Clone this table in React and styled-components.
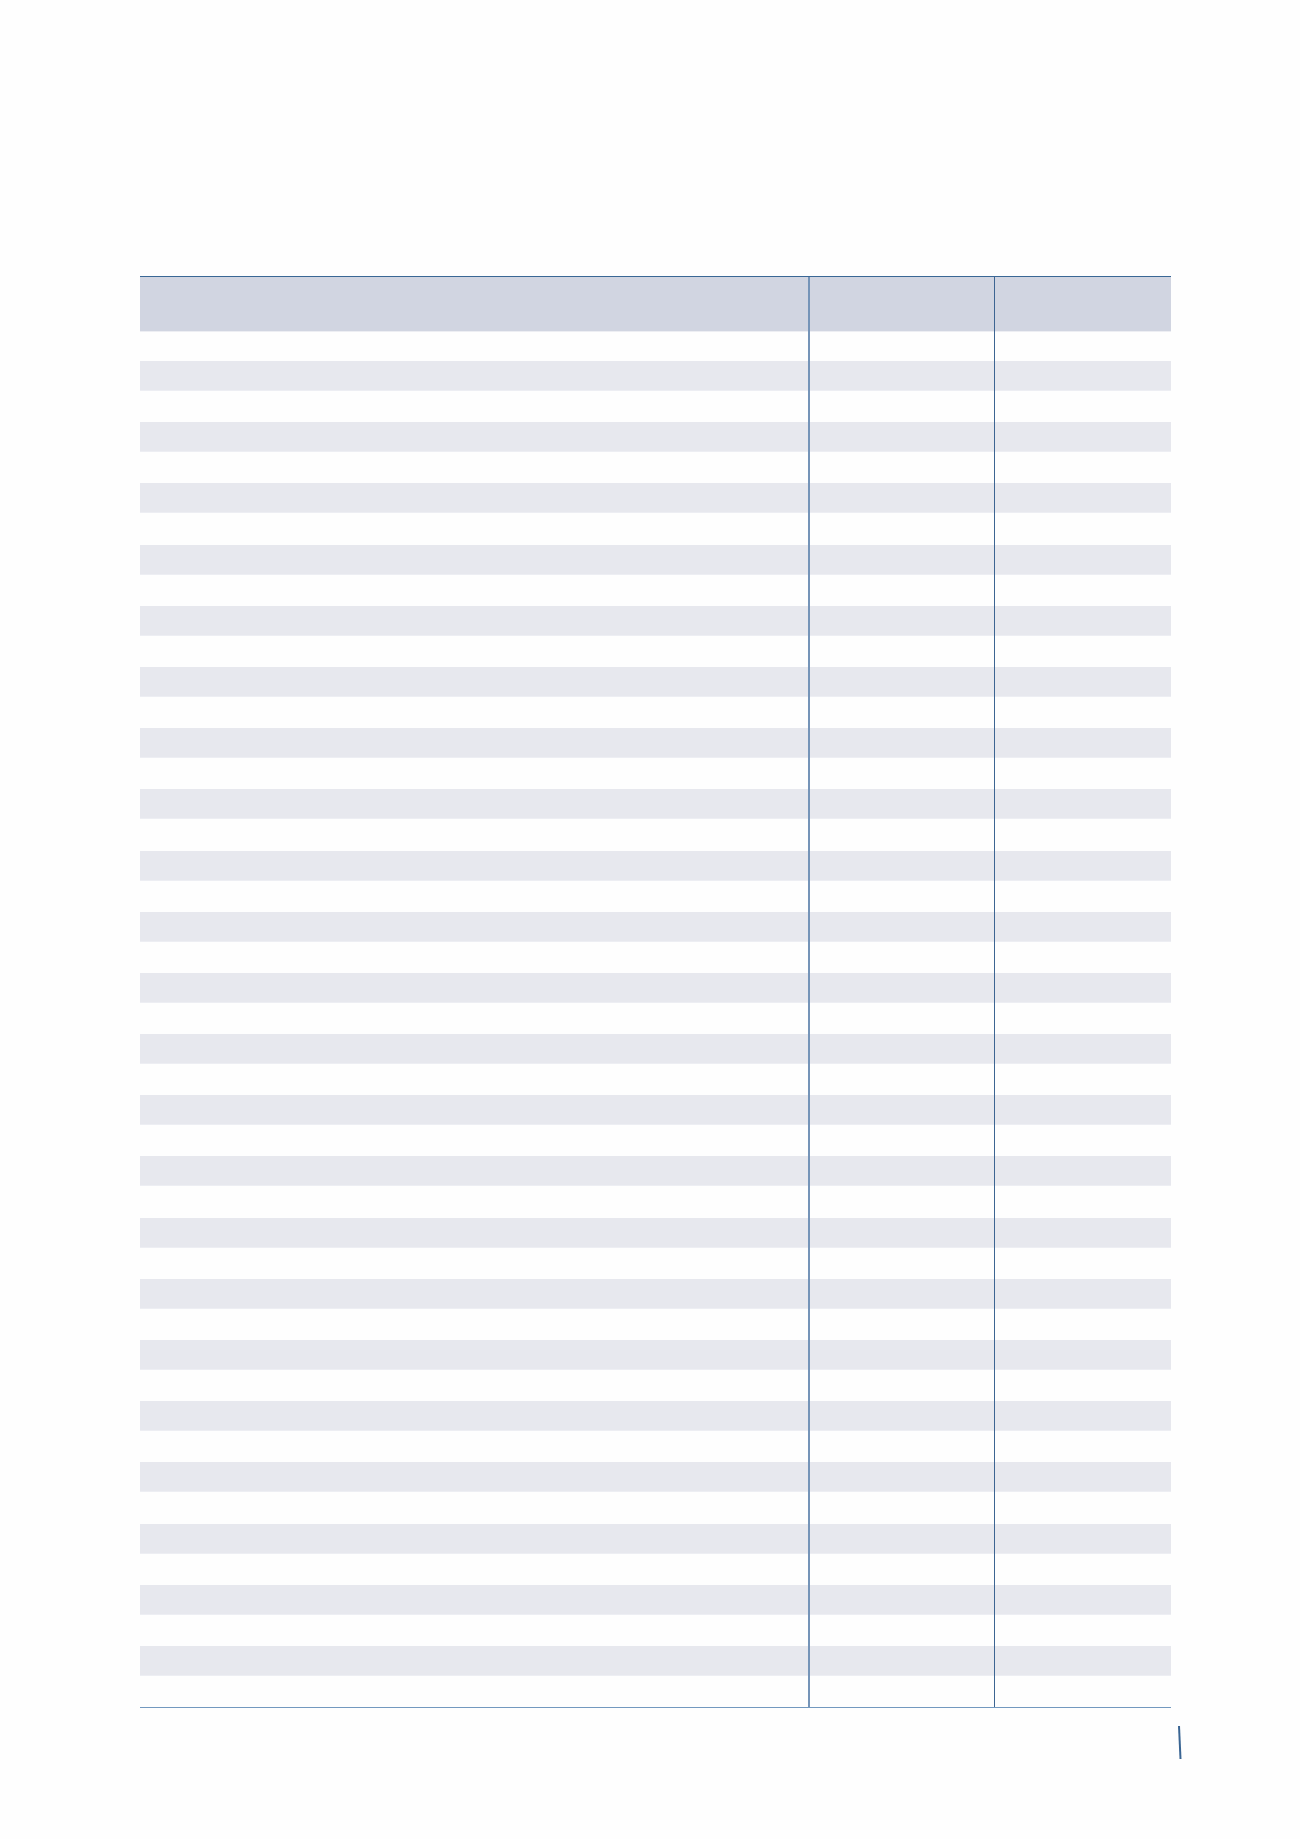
import React from "react";
import styled, { createGlobalStyle } from "styled-components";

const Global = createGlobalStyle`
  html, body { margin: 0; padding: 0; background: #fefefe; }
  body { font-family: "Liberation Sans", Arial, sans-serif; }
`;

const Page = styled.div`
  width: 1300px;
  min-height: 1839px;
  box-sizing: border-box;
  padding: 276px 0 0 140px;
  background: #fefefe;
`;

const Table = styled.div`
  width: 1031px;
  border-top: 1.5px solid #3a6795;
  border-bottom: 1.5px solid #7399bf;
  display: flex;
  flex-direction: column;
`;

const Row = styled.div`
  display: grid;
  grid-template-columns: 668px 186px 177px;
  height: ${(p) => p.$h}px;
  background: ${(p) =>
    p.$kind === "head" ? "#d1d5e1" : p.$kind === "stripe" ? "#e7e8ee" : "#fefefe"};
  box-shadow: ${(p) => (p.$kind === "white" ? "none" : "inset 0 -1px 0 #edeef3")};
`;

const Cell = styled.div`
  box-sizing: border-box;
  border-left: ${(p) =>
    p.$divider === 1
      ? "2px solid #7594b8"
      : p.$divider === 2
      ? "1px solid #3d6592"
      : "none"};
`;

const Footer = styled.div`
  width: 1031px;
  display: flex;
  justify-content: flex-end;
  margin-top: 17px;
`;

const Mark = styled.svg`
  display: block;
  margin-right: -12px;
`;

function TableRow({ h, kind }) {
  return (
    <Row $h={h} $kind={kind}>
      <Cell />
      <Cell $divider={1} />
      <Cell $divider={2} />
    </Row>
  );
}

export default function App() {
  const rows = [{ h: 29, kind: "white" }];
  for (let i = 0; i < 22; i++) {
    rows.push({ h: 30, kind: "stripe" });
    rows.push({ h: i < 21 ? 31.2 : 31, kind: "white" });
  }
  return (
    <>
      <Global />
      <Page>
        <Table>
          <TableRow h={55} kind="head" />
          {rows.map((r, i) => (
            <TableRow key={i} h={r.h} kind={r.kind} />
          ))}
        </Table>
        <Footer>
          <Mark width="6" height="36" viewBox="0 0 6 36">
            <line x1="2" y1="1" x2="3.5" y2="34" stroke="#3a6593" strokeWidth="2" />
          </Mark>
        </Footer>
      </Page>
    </>
  );
}
